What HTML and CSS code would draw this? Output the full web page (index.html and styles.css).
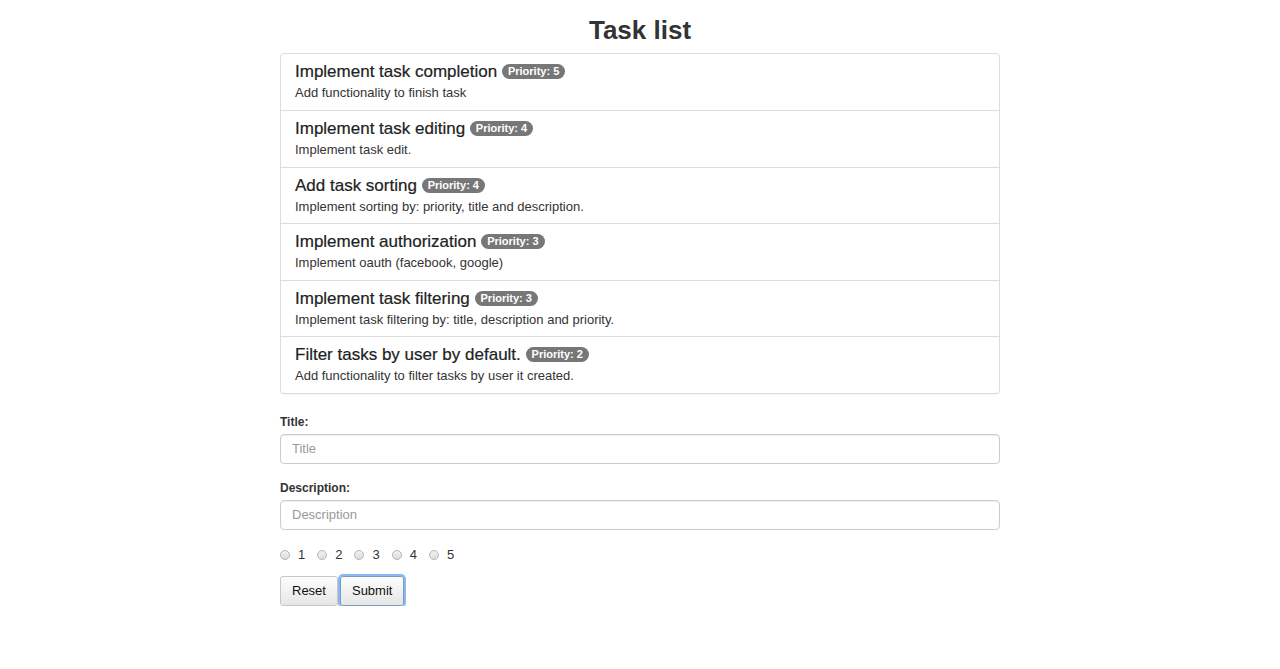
FILE: index.html
```html
<!DOCTYPE html>
<html>
<head>
<meta charset="utf-8">
<link rel="stylesheet" href="styles.css">
</head>
<body>
<div class="container">
  <h1 class="page-title">Task list</h1>
  <ul class="list-group">
    <li class="list-item">
      <h4 class="item-title">Implement task completion <span class="badge">Priority: 5</span></h4>
      <p class="item-desc">Add functionality to finish task</p>
    </li>
    <li class="list-item">
      <h4 class="item-title">Implement task editing <span class="badge">Priority: 4</span></h4>
      <p class="item-desc">Implement task edit.</p>
    </li>
    <li class="list-item">
      <h4 class="item-title">Add task sorting <span class="badge">Priority: 4</span></h4>
      <p class="item-desc">Implement sorting by: priority, title and description.</p>
    </li>
    <li class="list-item">
      <h4 class="item-title">Implement authorization <span class="badge">Priority: 3</span></h4>
      <p class="item-desc">Implement oauth (facebook, google)</p>
    </li>
    <li class="list-item">
      <h4 class="item-title">Implement task filtering <span class="badge">Priority: 3</span></h4>
      <p class="item-desc">Implement task filtering by: title, description and priority.</p>
    </li>
    <li class="list-item">
      <h4 class="item-title">Filter tasks by user by default. <span class="badge">Priority: 2</span></h4>
      <p class="item-desc">Add functionality to filter tasks by user it created.</p>
    </li>
  </ul>
  <form class="task-form">
    <div class="form-group">
      <label class="form-label" for="title">Title:</label>
      <input class="form-control" id="title" type="text" placeholder="Title">
    </div>
    <div class="form-group">
      <label class="form-label" for="desc">Description:</label>
      <input class="form-control" id="desc" type="text" placeholder="Description">
    </div>
    <div class="radios">
      <label class="radio"><span class="radio-dot"></span>1</label>
      <label class="radio"><span class="radio-dot"></span>2</label>
      <label class="radio"><span class="radio-dot"></span>3</label>
      <label class="radio"><span class="radio-dot"></span>4</label>
      <label class="radio"><span class="radio-dot"></span>5</label>
    </div>
    <div class="buttons">
      <button type="button" class="btn">Reset</button>
      <button type="button" class="btn btn-focus">Submit</button>
    </div>
  </form>
</div>
</body>
</html>
```

FILE: styles.css
```css
* { box-sizing: border-box; }
html, body { margin: 0; padding: 0; background: #fff; }
body {
  font-family: "Liberation Sans", Arial, Helvetica, sans-serif;
  font-size: 13px;
  color: #333;
}
.container {
  width: 720px;
  margin: 0 auto;
}
.page-title {
  margin: 0;
  padding-top: 14px;
  height: 53px;
  text-align: center;
  font-size: 26px;
  line-height: 32px;
  font-weight: bold;
  color: #333;
}
.list-group {
  list-style: none;
  margin: 0;
  padding: 0;
  border: 1px solid #ddd;
  border-radius: 4px;
  box-shadow: 0 1px 1px rgba(0,0,0,0.05);
}
.list-item {
  padding: 8px 14px 8px 14px;
  border-top: 1px solid #ddd;
  height: 56.6px;
}
.list-item:first-child { border-top: none; height: 56px; padding-top: 8px; }
.item-title {
  margin: 0;
  font-size: 17px;
  line-height: 20px;
  font-weight: normal;
  color: #222;
  -webkit-text-stroke: 0.2px #222;
}
.badge {
  display: inline-block;
  vertical-align: 2px;
  background: #777;
  color: #fff;
  font-size: 11px;
  font-weight: bold;
  line-height: 11px;
  padding: 2px 6px;
  border-radius: 8px;
  -webkit-text-stroke: 0;
}
.item-desc {
  margin: 2px 0 0 0;
  font-size: 13px;
  line-height: 17px;
}
.task-form { margin-top: 21px; }
.form-group { margin-bottom: 17px; }
.form-label {
  display: block;
  font-weight: bold;
  font-size: 12px;
  line-height: 15px;
  margin-bottom: 4px;
}
.form-control {
  display: block;
  width: 100%;
  height: 30px;
  padding: 5px 11px;
  border: 1px solid #ccc;
  border-radius: 4px;
  font-family: inherit;
  font-size: 13px;
  color: #555;
  box-shadow: inset 0 1px 1px rgba(0,0,0,0.075);
}
.form-control::placeholder { color: #999; }
.radios {
  display: flex;
  gap: 12px;
  margin-top: -2px;
  height: 20px;
  align-items: center;
}
.radio {
  display: flex;
  align-items: center;
  gap: 8px;
  font-size: 13px;
}
.radio-dot {
  display: inline-block;
  width: 10px;
  height: 10px;
  border-radius: 50%;
  border: 1px solid #b5b5b5;
  background: linear-gradient(#f2f2f2, #dcdcdc);
}
.buttons {
  display: flex;
  gap: 2px;
  margin-top: 11px;
}
.btn {
  height: 30px;
  padding: 0 11px;
  font-family: inherit;
  font-size: 13px;
  color: #111;
  border: 1px solid #c7c7c7;
  border-radius: 3px;
  background: linear-gradient(#fdfdfd, #e6e6e6);
}
.btn-focus {
  box-shadow: 0 0 0 2px #8ab8f0;
  border: 1px solid #7a9bc0;
}
```
